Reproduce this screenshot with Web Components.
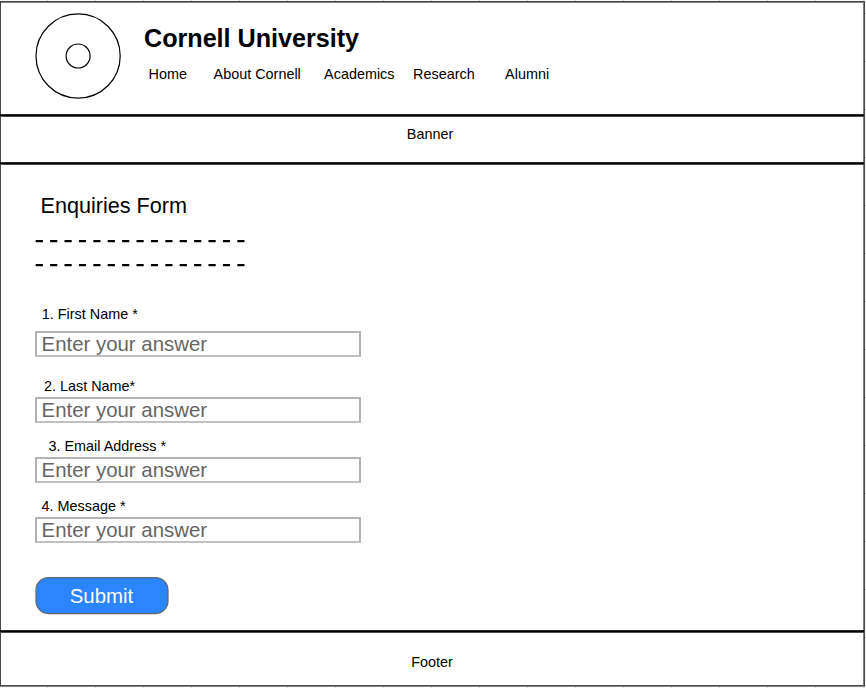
<!DOCTYPE html>
<html lang="en">
<head>
<meta charset="utf-8">
<title>Cornell University</title>
<style>
html, body { margin: 0; background: #fff; }
body { width: 866px; height: 688px; overflow: hidden; font-family: "Liberation Sans", Arial, sans-serif; font-size: 14.4px; color: #000; }
</style>
</head>
<body>
<wire-page>
  <site-header slot="header" name="Cornell University">
    <nav-item style="width:65px">Home</nav-item>
    <nav-item style="width:110.5px">About Cornell</nav-item>
    <nav-item style="width:89px">Academics</nav-item>
    <nav-item style="width:92px">Research</nav-item>
    <nav-item>Alumni</nav-item>
  </site-header>
  <site-band slot="banner" style="--h:45px;--pad:9px;--shift:-2px">Banner</site-band>
  <enquiry-form slot="main">
    <form-field label="1. First Name *" style="--indent:6.8px;--gap:9px;margin-bottom:21px"></form-field>
    <form-field label="2. Last Name*" style="--indent:9px;margin-bottom:15px"></form-field>
    <form-field label="3. Email Address *" style="--indent:13.5px;margin-bottom:15px"></form-field>
    <form-field label="4. Message *" style="--indent:6.5px"></form-field>
  </enquiry-form>
  <site-band slot="footer" style="--h:52px;--pad:21px;--shift:0px">Footer</site-band>
</wire-page>
<script>
function define(name, html) {
  const template = document.createElement('template');
  template.innerHTML = html;
  customElements.define(name, class extends HTMLElement {
    constructor() {
      super();
      this.attachShadow({ mode: 'open' }).append(template.content.cloneNode(true));
    }
    connectedCallback() {
      this.shadowRoot.querySelectorAll('[data-attr]').forEach(el => {
        el.textContent = this.getAttribute(el.dataset.attr) || '';
      });
    }
  });
}

define('rule-line', `<style>
  :host { display: block; height: 3px; flex: none; margin: 0 -1px 0 -1px; background: linear-gradient(#262626 1px, #000 1px 2px, #4c4c4c 2px); }
</style>`);

define('nav-item', `<style>:host { display: block; line-height: 16px; white-space: nowrap; flex: none; }</style><slot></slot>`);

define('ring-logo', `<style>:host { display: block; width: 86px; height: 86px; } svg { display: block; }</style>
<svg width="86" height="86" fill="none" stroke="#000" stroke-width="1.2"><circle cx="43.1" cy="43" r="42.1"/><circle cx="43.1" cy="43" r="12"/></svg>`);

define('site-header', `<style>
  :host { display: flex; height: 111px; box-sizing: border-box; padding: 9.7px 0 0 34px; }
  .text { padding: 10.3px 0 0 23px; }
  h1 { margin: 0; font-size: 25.2px; line-height: 30px; font-weight: 700; letter-spacing: -0.03px; }
  nav { display: flex; padding: 13px 0 0 4.6px; }
</style>
<ring-logo></ring-logo>
<div class="text"><h1 data-attr="name"></h1><nav><slot></slot></nav></div>`);

define('site-band', `<style>
  :host { display: block; height: var(--h); box-sizing: border-box; padding-top: var(--pad); text-align: center; line-height: 16px; }
  span { position: relative; left: var(--shift); }
</style><span><slot></slot></span>`);

define('form-field', `<style>
  :host { display: block; }
  label { display: block; line-height: 16px; padding-left: var(--indent); margin-bottom: var(--gap, 3px); }
  .box { display: flex; align-items: center; width: 326px; height: 26px; box-sizing: border-box; border: 2px solid; border-color: #b3b3b3 #b3b3b3 #c0c0c0; padding-left: 4.6px; font-size: 20.4px; line-height: 22px; color: #666; }
</style><label data-attr="label"></label><div class="box">Enter your answer</div>`);

define('dash-line', `<style>:host { display: block; } svg { display: block; }</style>
<svg width="212" height="4"><line x1="0.7" y1="2.1" x2="210.7" y2="2.1" stroke="#000" stroke-width="2.4" stroke-dasharray="7.2 7.2"/></svg>`);

define('submit-button', `<style>
  :host { display: block; position: relative; width: 134px; height: 38px; text-align: center; line-height: 39px; color: #fff; font-size: 20.4px; }
  svg { position: absolute; left: 0; top: 0; }
  span { position: relative; left: -0.5px; }
</style><svg width="134" height="38"><rect x="1" y="0.6" width="132" height="36" rx="12.5" fill="#2a85ff" stroke="#666" stroke-width="1.2"/></svg><span><slot></slot></span>`);

define('enquiry-form', `<style>
  :host { display: block; height: 465px; box-sizing: border-box; padding: 28px 0 0 34px; }
  h2 { margin: 0 0 20px 5.6px; font-size: 21.6px; line-height: 26px; font-weight: 400; }
  dash-line + dash-line { margin: 20px 0 39px; }
  submit-button { margin: 34px 0 0; }
</style>
<h2>Enquiries Form</h2>
<dash-line></dash-line><dash-line></dash-line>
<slot></slot>
<submit-button>Submit</submit-button>`);

define('wire-page', `<style>
  :host {
    display: block; height: 688px; box-sizing: border-box; padding-top: 1px;
    background:
      repeating-linear-gradient(to right, transparent 0 47px, #d4d4d4 47px 48px) 0 0 / 100% 1px no-repeat,
      repeating-linear-gradient(to right, transparent 0 47px, #d4d4d4 47px 48px) 0 100% / 100% 1px no-repeat,
      repeating-linear-gradient(to bottom, transparent 0 47px, #d4d4d4 47px 48px) 100% -34px / 1px 730px no-repeat,
      #f9f9f9;
  }
  .outer { width: 865px; height: 686px; box-sizing: border-box; border: 1px solid #484848; border-bottom-color: #888; }
  .frame { display: flex; flex-direction: column; width: 863px; height: 684px; box-sizing: border-box; border: 1px solid #808080; border-left: 0; border-bottom-color: #484848; background: #fff; }
</style>
<div class="outer"><div class="frame">
  <slot name="header"></slot><rule-line></rule-line>
  <slot name="banner"></slot><rule-line></rule-line>
  <slot name="main"></slot><rule-line></rule-line>
  <slot name="footer"></slot>
</div></div>`);
</script>
</body>
</html>
